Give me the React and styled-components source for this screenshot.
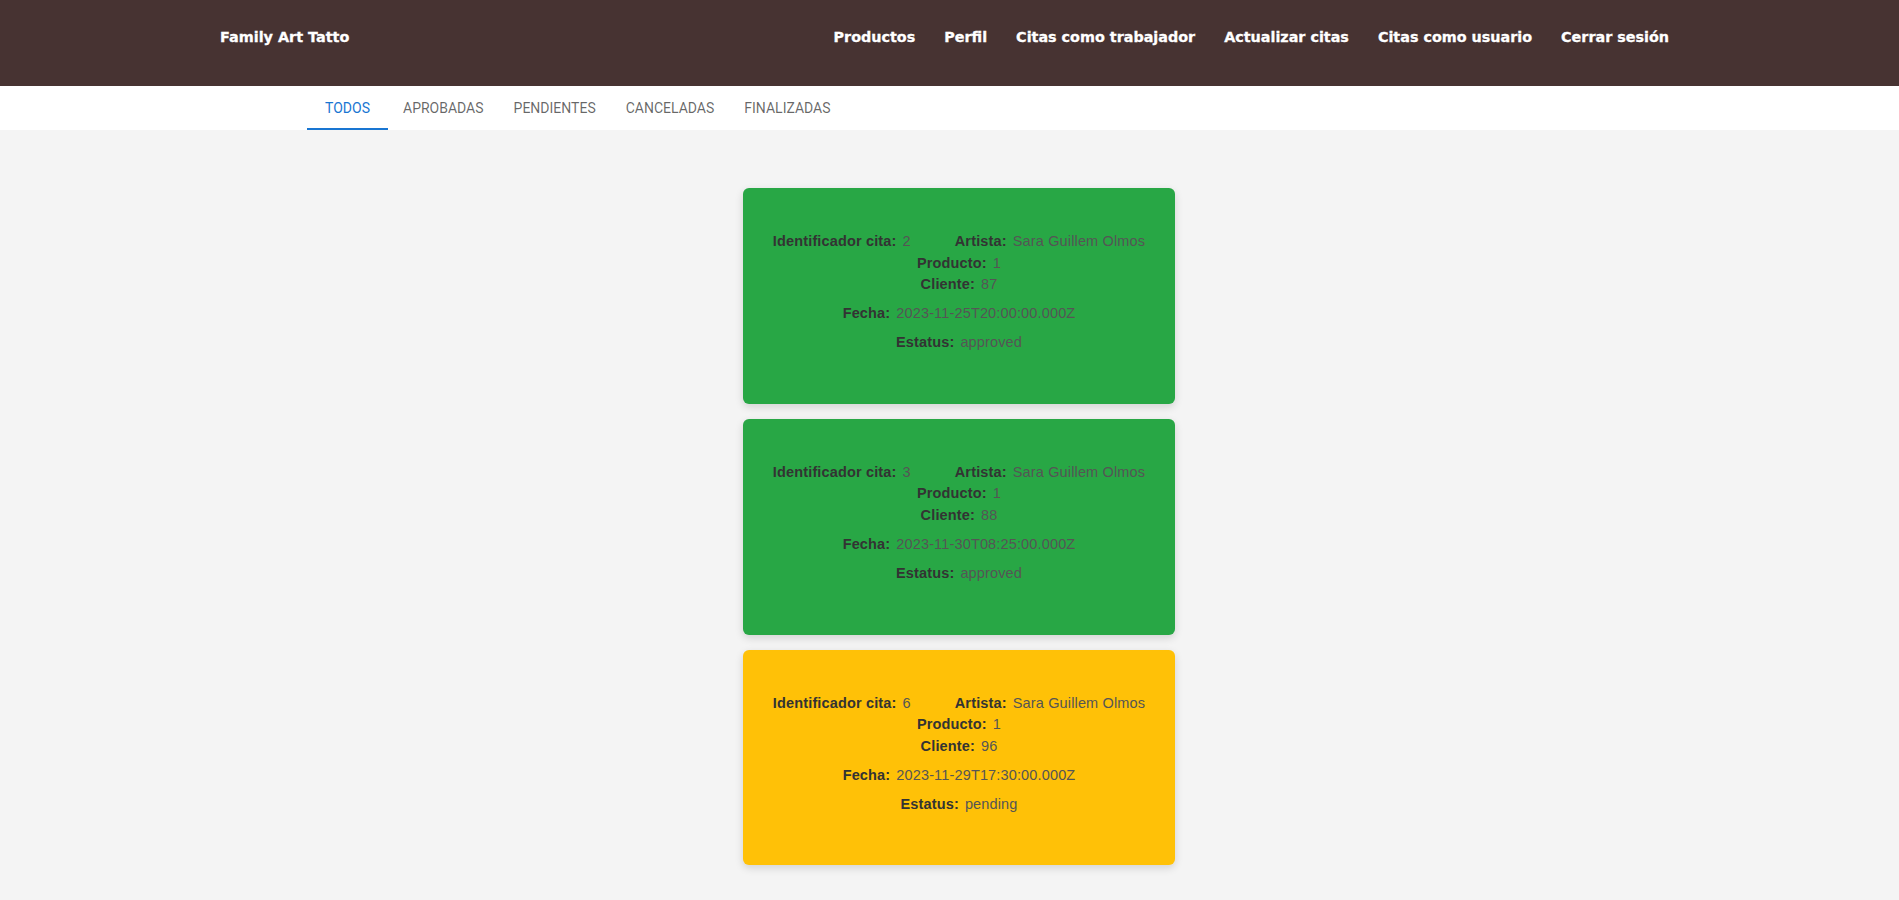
import React from 'react';
import styled, { createGlobalStyle } from 'styled-components';

const GlobalStyle = createGlobalStyle`
    body {
        margin: 0;
        background: #f4f4f4;
        font-family: 'Liberation Sans', Arial, sans-serif;
    }
`;

const Header = styled.header`
    height: 86px;
    box-sizing: border-box;
    background: #473332;
    padding: 28px 230px 0 220px;
    display: flex;
    justify-content: space-between;
    align-items: flex-start;
`;

const Logo = styled.a`
    color: #fff;
    font-family: 'DejaVu Sans', Verdana, sans-serif;
    font-weight: 700;
    font-size: 14.4px;
    line-height: 18px;
    text-decoration: none;
    -webkit-text-stroke: 0.3px #fff;
`;

const Nav = styled.nav`
    display: flex;
    gap: 29px;
`;

const NavLink = styled.a`
    color: #fff;
    font-family: 'DejaVu Sans', Verdana, sans-serif;
    font-weight: 700;
    font-size: 14.35px;
    line-height: 18px;
    text-decoration: none;
    -webkit-text-stroke: 0.3px #fff;
`;

const TabBar = styled.div`
    background: #fff;
    height: 44px;
    padding-left: 307px;
    display: flex;
`;

const Tab = styled.button`
    background: none;
    border: none;
    border-bottom: 2px solid ${p => (p.active ? '#1976d2' : 'transparent')};
    min-width: 81px;
    padding: 2px 15px 0;
    margin: 0;
    font-family: Roboto, 'Liberation Sans', sans-serif;
    font-weight: 400;
    font-size: 14px;
    letter-spacing: 0;
    text-transform: uppercase;
    color: ${p => (p.active ? '#1976d2' : 'rgba(0, 0, 0, 0.6)')};
    cursor: pointer;
`;

const List = styled.main`
    display: flex;
    flex-direction: column;
    align-items: center;
    gap: 15px;
    padding: 58px 0 30px 19px;
`;

const Card = styled.div`
    width: 432px;
    box-sizing: border-box;
    padding: 43px 16px 50px;
    border-radius: 6px;
    background: ${p => (p.status === 'pending' ? '#ffc107' : '#28a745')};
    box-shadow: 0 3px 8px rgba(0, 0, 0, 0.14);
    display: flex;
    flex-direction: column;
    align-items: center;
    font-size: 14.5px;
    letter-spacing: 0.15px;
    line-height: 21.6px;
`;

const Row = styled.div`
    display: flex;
    justify-content: center;
    gap: 44px;
    margin-top: ${p => (p.spaced ? '7.4px' : '0')};
`;

const Field = styled.div`
    display: flex;
`;

const Label = styled.span`
    font-weight: 700;
    color: #333;
`;

const Value = styled.span`
    margin-left: 6px;
    color: #555;
`;

const citas = [
    { id: 2, artista: 'Sara Guillem Olmos', producto: 1, cliente: 87, fecha: '2023-11-25T20:00:00.000Z', estatus: 'approved' },
    { id: 3, artista: 'Sara Guillem Olmos', producto: 1, cliente: 88, fecha: '2023-11-30T08:25:00.000Z', estatus: 'approved' },
    { id: 6, artista: 'Sara Guillem Olmos', producto: 1, cliente: 96, fecha: '2023-11-29T17:30:00.000Z', estatus: 'pending' },
];

const tabs = ['Todos', 'Aprobadas', 'Pendientes', 'Canceladas', 'Finalizadas'];

const App = () => {
    return (
        <>
            <GlobalStyle />
            <Header>
                <Logo href="#">Family Art Tatto</Logo>
                <Nav>
                    <NavLink href="#">Productos</NavLink>
                    <NavLink href="#">Perfil</NavLink>
                    <NavLink href="#">Citas como trabajador</NavLink>
                    <NavLink href="#">Actualizar citas</NavLink>
                    <NavLink href="#">Citas como usuario</NavLink>
                    <NavLink href="#">Cerrar sesión</NavLink>
                </Nav>
            </Header>

            <TabBar>
                {tabs.map((t, i) => (
                    <Tab key={t} active={i === 0}>{t}</Tab>
                ))}
            </TabBar>

            <List>
                {citas.map(c => (
                    <Card key={c.id} status={c.estatus}>
                        <Row>
                            <Field>
                                <Label>Identificador cita:</Label>
                                <Value>{c.id}</Value>
                            </Field>
                            <Field>
                                <Label>Artista:</Label>
                                <Value>{c.artista}</Value>
                            </Field>
                        </Row>
                        <Row>
                            <Field>
                                <Label>Producto:</Label>
                                <Value>{c.producto}</Value>
                            </Field>
                        </Row>
                        <Row>
                            <Field>
                                <Label>Cliente:</Label>
                                <Value>{c.cliente}</Value>
                            </Field>
                        </Row>
                        <Row spaced>
                            <Field>
                                <Label>Fecha:</Label>
                                <Value>{c.fecha}</Value>
                            </Field>
                        </Row>
                        <Row spaced>
                            <Field>
                                <Label>Estatus:</Label>
                                <Value>{c.estatus}</Value>
                            </Field>
                        </Row>
                    </Card>
                ))}
            </List>
        </>
    );
};

export default App;
